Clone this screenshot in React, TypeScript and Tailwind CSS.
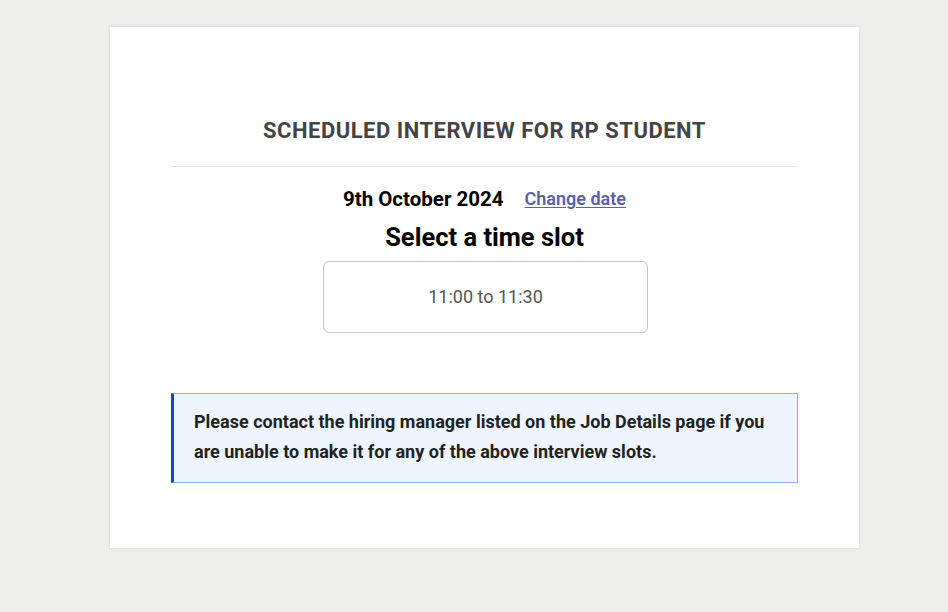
import React from 'react';

const slots = ['11:00 to 11:30'];

const App: React.FC = () => {
  return (
    <div className="min-h-[612px] bg-[#eeeeec] pt-[27px] font-['Roboto',sans-serif]">
      <div className="ml-[110px] w-[749px] bg-white shadow-[0_0_3px_rgba(0,0,0,0.12)] px-[61px] pt-[90px] pb-[65px]">
        <h1 className="text-center text-[22px] leading-[28px] font-bold tracking-[0.5px] text-[#444444] pb-[21px] border-b border-[#e4e4e4]">
          SCHEDULED INTERVIEW FOR RP STUDENT
        </h1>

        <div className="mt-[18px] flex justify-center items-center gap-[21px] leading-[28px]">
          <span className="text-[20.5px] font-bold text-black">9th October 2024</span>
          <a href="#" className="text-[18px] font-semibold text-[#5c5fa8] underline underline-offset-2">
            Change date
          </a>
        </div>

        <h2 className="mt-[8px] text-center text-[25.5px] leading-[32px] font-bold text-black">
          Select a time slot
        </h2>

        <div className="mt-[8px] flex flex-col items-center gap-2">
          {slots.map((slot) => (
            <button
              key={slot}
              className="ml-[2px] w-[325px] h-[72px] rounded-[6px] border border-[#c6c6c6] bg-white text-[18px] leading-[26px] text-[#555555]"
            >
              {slot}
            </button>
          ))}
        </div>

        <div className="mt-[60px] h-[90px] border border-[#8fb0ea] border-l-[3px] border-l-[#1447d0] bg-[#eef5fe] pl-[20px] pr-[24px] pt-[13px]">
          <p className="text-[18px] leading-[30px] font-bold text-[#222222]">
            Please contact the hiring manager listed on the Job Details page if you are unable to make it for any of the above interview slots.
          </p>
        </div>
      </div>
    </div>
  );
};

export default App;
